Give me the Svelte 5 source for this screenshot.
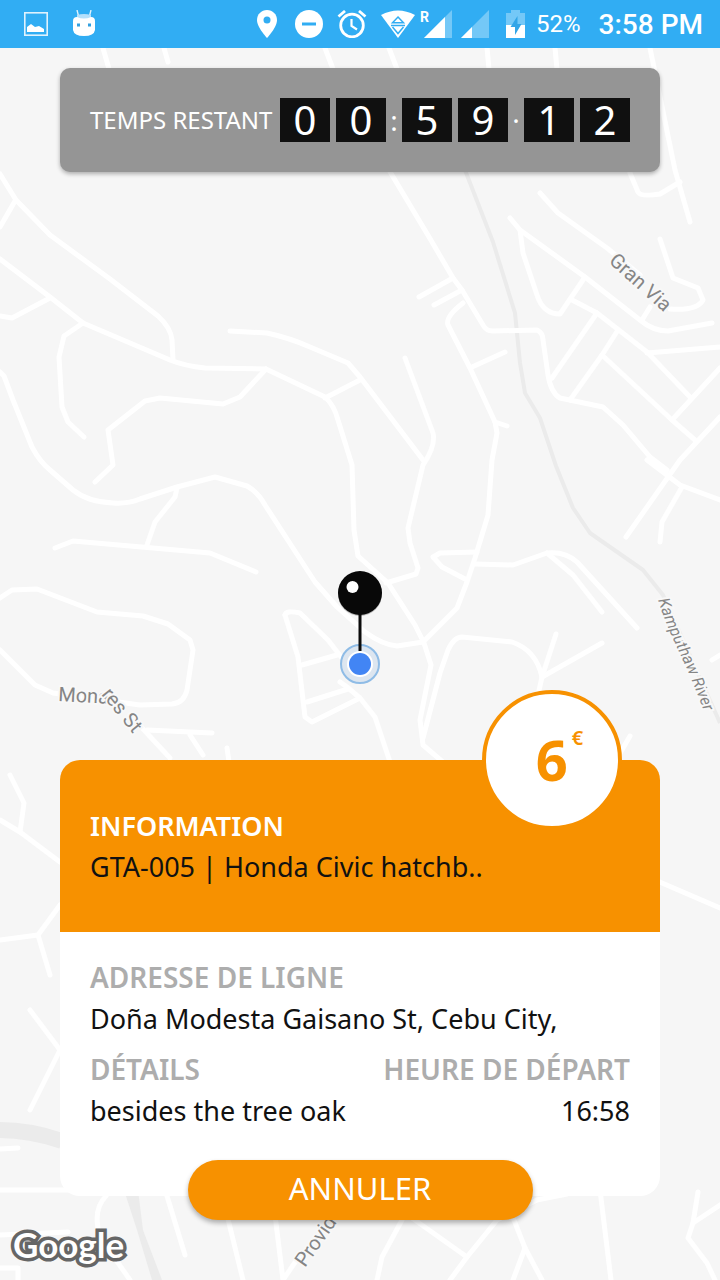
<script lang="ts">
	type Digit = { kind: 'digit' | 'sep'; value: string };

	const timer: Digit[] = [
		{ kind: 'digit', value: '0' },
		{ kind: 'digit', value: '0' },
		{ kind: 'sep', value: ':' },
		{ kind: 'digit', value: '5' },
		{ kind: 'digit', value: '9' },
		{ kind: 'sep', value: '·' },
		{ kind: 'digit', value: '1' },
		{ kind: 'digit', value: '2' }
	];

	const booking = {
		vehicle: 'GTA-005 | Honda Civic hatchb..',
		address: 'Doña Modesta Gaisano St, Cebu City,',
		details: 'besides the tree oak',
		departure: '16:58',
		price: '6'
	};

	const roads = [
		// west
		'M0 174L16 200L50 235L110 279L158 316Q171 328 172 340L173 360',
		'M15 201L0 227',
		'M0 259L50 297L83 323L170 360Q185 366 205 368L266 369L325 397Q334 405 338 420L352 465L354 530L358 556L388 583L415 625L424 643L431 665L420 720L423 745L450 768',
		'M50 298L12 318L0 316',
		'M83 323L64 336L59 357L62 407L68 422L84 437',
		'M0 372L4 376L13 400L32 447Q40 462 50 470L73 490Q88 502 113 503Q128 504 140 499L177 487L215 477L247 486Q258 492 265 505L315 582L337 607L365 632Q383 645 397 646L423 642L457 608L467 582L475 558L488 515L492 460L497 433L495 422L470 368L448 325Q445 317 463 303',
		'M266 369L240 397L223 404L160 398L145 401L108 430L113 465L95 482',
		'M230 331L267 333Q290 338 310 347L348 363L360 377L423 460',
		'M325 398L360 380',
		'M55 548L73 541L210 553L256 572',
		'M177 488L175 497L155 522L147 545',
		'M0 598L12 590L37 589L97 612L143 616L168 624L190 640L193 650L187 690Q184 703 172 704L140 705L53 693L35 685L0 650',
		'M130 715L170 758',
		'M147 730L212 733',
		'M190 735L203 755',
		'M227 748L229 762',
		'M285 615Q286 610 300 613L328 640L345 662M340 682L347 687L360 698L375 717L390 762',
		'M285 615L298 657L305 717L312 722L360 698',
		'M302 665L337 655',
		'M307 702L348 689',
		// centre
		'M325 48L333 69',
		'M389 48L397 69',
		'M487 48L489 69',
		'M555 48L557 69',
		'M103 48L109 69',
		'M164 48L168 62',
		'M389 170L432 242L453 278L462 290L483 325Q486 331 493 331L537 330Q543 333 543 340L548 375Q551 393 560 398L603 407L623 425L650 457L667 470M647 460L680 485L720 500',
		'M453 278L419 297',
		'M462 290L434 305',
		'M472 367L505 352',
		'M495 422L507 426',
		'M405 358L433 433Q436 446 423 465L408 528L410 543L418 568L416 574L386 583',
		'M477 552L440 553L433 557L442 567L467 580',
		'M475 564L513 565L547 553Q565 551 577 562L637 628',
		'M547 553L573 575L602 612',
		'M423 738L440 673L448 650Q454 637 462 637L512 642Q536 650 542 677L538 695',
		'M542 677L602 643',
		'M542 677L556 634',
		// east
		'M650 48L675 170L690 222',
		'M630 173L638 192Q640 197 660 194L680 182',
		'M540 193L558 213L607 248L640 275',
		'M510 218L520 230L585 277L640 320Q653 331 668 331L712 323',
		'M520 230L523 253L537 295Q543 314 560 314L585 277',
		'M660 239L673 278L698 288L703 300Q697 311 670 309',
		'M650 307L642 320',
		'M572 300L597 313L647 352L690 397',
		'M597 313L552 378',
		'M618 330L602 355L570 400',
		'M602 355L672 420L695 440',
		'M647 353L720 347',
		'M672 420L720 368',
		'M720 417L680 460L626 537',
		'M682 487L662 522L660 542',
		'M712 660L720 655',
		'M615 762L630 736',
		'M655 880L720 908',
		// south
		'M10 775L24 803L20 832L60 862',
		'M0 820L20 832',
		'M60 905L38 935L50 975',
		'M0 940L38 935',
		'M30 1010L60 1050L30 1110',
		'M0 1149L18 1148',
		'M0 1190L70 1190',
		'M0 1235L68 1232',
		'M0 1268L18 1268L18 1280',
		'M106 1196Q92 1210 100 1237L130 1280',
		'M167 1196L185 1255',
		'M227 1215L243 1280',
		'M275 1215L283 1280L300 1255',
		'M402 1220L382 1257L377 1280',
		'M412 1218L467 1257',
		'M450 1280L467 1257L497 1220L537 1200L567 1194',
		'M512 1215L525 1248L542 1280',
		'M525 1248L513 1280',
		'M600 1190L611 1280',
		'M698 1192L693 1223L688 1238L707 1263L715 1280',
		'M693 1223L720 1205'
	];
</script>

<div class="screen">
	<header class="status">
		<div class="group notices">
			<svg width="24" height="24" viewBox="0 0 24 24" aria-hidden="true">
				<rect x="0.8" y="0.8" width="22.4" height="22.4" fill="none" stroke="#dff2fd" stroke-width="1.6" />
				<path d="M3 20V15L7 12L11 15L15 14L20 17V20Z" fill="#fff" />
			</svg>
			<svg width="24" height="28" viewBox="0 0 24 28" aria-hidden="true">
				<path d="M5 0L6.500 6M19 0L17.500 6" stroke="#dff2fd" stroke-width="1.400" />
				<path d="M5 9V5Q12 3 19 5V9Z" fill="#b5e0fb" />
				<path d="M1 11Q1 7 5 7Q12 10 19 7Q23 7 23 11V20Q22 26 12 26Q2 26 1 20Z" fill="#fff" />
				<path d="M5 13.500h3v3h-3zM16 13.500h3v3h-3z" fill="#33a0e0" />
			</svg>
		</div>
		<div class="group">
			<svg width="28" height="28" viewBox="0 0 28 28" aria-hidden="true">
				<path d="M14 0C8.400 0 4 4.400 4 10C4 17.500 14 28 14 28S24 17.500 24 10C24 4.400 19.600 0 14 0Z" fill="#fff" />
				<circle cx="14" cy="10" r="3.500" fill="#31adf3" />
			</svg>
			<svg width="28" height="28" viewBox="0 0 28 28" aria-hidden="true">
				<circle cx="14" cy="14" r="14" fill="#fff" />
				<path d="M7 14H21" stroke="#31adf3" stroke-width="3" />
			</svg>
			<svg width="30" height="28" viewBox="0 0 30 28" aria-hidden="true">
				<circle cx="15" cy="15.500" r="11.300" fill="none" stroke="#fff" stroke-width="2.800" />
				<path d="M14.500 9V16L20 19.500" fill="none" stroke="#fff" stroke-width="2.200" />
				<path d="M1.500 6.500L8 1M28.500 6.500L22 1" stroke="#fff" stroke-width="2.800" />
			</svg>
			<div class="network">
				<svg width="34" height="28" viewBox="0 0 34 28" aria-hidden="true">
					<path d="M0 5Q17 -4 34 5L17 28Z" fill="#fff" />
					<path d="M17 7L22.500 12.800H11.500Z" fill="#fff" stroke="#31adf3" stroke-width="1.500" />
					<path d="M10 15.500H24M11.500 17L17 23.500L22.500 17" fill="none" stroke="#31adf3" stroke-width="1.500" />
				</svg>
				<svg width="32" height="28" viewBox="0 0 32 28" aria-hidden="true">
					<path d="M31 0V28H3Z" fill="#74c8f7" />
					<path d="M24 7V28H3Z" fill="#fff" />
					<text class="roaming" x="-1" y="12">R</text>
				</svg>
				<svg width="30" height="28" viewBox="0 0 30 28" aria-hidden="true">
					<path d="M30 0V28H2Z" fill="#74c8f7" />
					<path d="M13 17V28H2Z" fill="#fff" />
				</svg>
			</div>
			<svg width="26" height="28" viewBox="0 0 26 28" aria-hidden="true">
				<path d="M3 3H8V0H17V3H22V15H3Z" fill="#74c8f7" />
				<path d="M3 15H22V28H3Z" fill="#fff" />
				<path d="M14.500 6L7.500 17H12V25L18.500 14H14.500Z" fill="#31a5e8" />
			</svg>
		</div>
		<span class="battery">52%</span>
		<time class="clock">3:58 PM</time>
	</header>

	<main class="content">
		<svg class="map" viewBox="0 48 720 1232" preserveAspectRatio="xMidYMid slice" aria-label="Carte">
			<defs>
				<path id="monares" d="M58 701L112 704M103 697L150 755" />
				<path id="kamputhaw" d="M658 600Q667 628 681 656Q695 686 711 730" />
			</defs>
			<g fill="none" stroke-linejoin="round">
				<path class="river" d="M465 170L493 242L515 313L520 363L525 393L540 418L556 466L573 508L590 533L643 570L663 595L720 723" />
				<path class="avenue" d="M0 1130Q30 1130 62 1141" />
				{#each roads as d}
					<path class="road" {d} />
				{/each}
			</g>
			<path d="M124 1190H138L143 1230L162 1280H152L137 1230Z" fill="#ebebeb" />
			<g class="labels">
				<text transform="translate(608 262) rotate(42)">Gran Via</text>
				<text><textPath href="#monares">Monares St</textPath></text>
				<text class="water"><textPath href="#kamputhaw">Kamputhaw River</textPath></text>
				<text transform="translate(305 1268) rotate(-55)">Provid</text>
			</g>
			<circle cx="360" cy="664" r="19" fill="#dde6f0" stroke="#8fbce6" stroke-width="2" />
			<circle cx="360" cy="664" r="13" fill="#fff" />
			<circle cx="360" cy="664" r="11" fill="#4285f4" />
			<path d="M360 612V651" stroke="#0c0c0c" stroke-width="3" />
			<circle cx="360" cy="594" r="22" fill="#000" opacity="0.25" />
			<circle cx="360" cy="593" r="22" fill="#080808" />
			<circle cx="352.500" cy="587" r="6" fill="#fff" />
		</svg>

		<section class="timer">
			<h1>TEMPS RESTANT</h1>
			<div class="digits" role="timer">
				{#each timer as part}
					<span class={part.kind}>{part.value}</span>
				{/each}
			</div>
		</section>

		<section class="card">
			<div class="price">
				<strong>{booking.price}</strong><sup>€</sup>
			</div>
			<div class="head">
				<h2>INFORMATION</h2>
				<p>{booking.vehicle}</p>
			</div>
			<div class="body">
				<div>
					<h2>ADRESSE DE LIGNE</h2>
					<p>{booking.address}</p>
				</div>
				<div class="split">
					<div>
						<h2>DÉTAILS</h2>
						<p>{booking.details}</p>
					</div>
					<div class="right">
						<h2>HEURE DE DÉPART</h2>
						<p>{booking.departure}</p>
					</div>
				</div>
			</div>
		</section>
		<button type="button" class="cancel">ANNULER</button>
		<span class="google">Google</span>
	</main>
</div>

<style>
	:global(body) {
		margin: 0;
	}

	.screen {
		min-height: 100vh;
		display: flex;
		flex-direction: column;
		font-family: 'Noto Sans', sans-serif;
		background: #f6f6f6;
	}

	.status {
		height: 48px;
		box-sizing: border-box;
		padding: 0 17px 0 24px;
		display: flex;
		align-items: center;
		background: #31adf3;
		color: #fff;
		font-family: Roboto, sans-serif;
	}

	.group {
		display: flex;
		align-items: center;
		gap: 14px;
	}

	.notices {
		gap: 24px;
		margin-right: auto;
	}

	.network {
		display: flex;
		gap: 6px;
	}

	.network svg {
		overflow: visible;
	}

	.roaming {
		font-size: 14px;
		font-weight: 700;
		fill: #fff;
	}

	.battery {
		margin-left: 7px;
		font-size: 24px;
	}

	.clock {
		margin-left: 18px;
		font-size: 28px;
		font-weight: 500;
	}

	.content {
		position: relative;
		flex: 1;
		display: flex;
		flex-direction: column;
		padding: 20px 60px 60px;
	}

	.map {
		position: absolute;
		inset: 0;
		width: 100%;
		height: 100%;
	}

	.road {
		stroke: #fff;
		stroke-width: 5;
		stroke-linecap: round;
	}

	.river {
		stroke: #ebebeb;
		stroke-width: 4;
	}

	.avenue {
		stroke: #ebebeb;
		stroke-width: 16;
	}

	.labels {
		font-family: Roboto, sans-serif;
		font-size: 20px;
		fill: #858585;
		stroke: #f8f8f8;
		stroke-width: 4;
		paint-order: stroke;
	}

	.water {
		font-size: 16px;
		font-style: italic;
	}

	.timer {
		position: relative;
		display: flex;
		align-items: center;
		justify-content: space-between;
		padding: 30px;
		border-radius: 10px;
		background: #959595;
		box-shadow: 0 2px 4px rgba(0, 0, 0, 0.3);
		color: #fff;
	}

	.timer h1 {
		margin: 0;
		font-size: 24px;
		font-weight: 400;
		line-height: 44px;
		white-space: nowrap;
	}

	.digits {
		display: flex;
		gap: 6px;
	}

	.digit {
		width: 50px;
		background: #101010;
		font-size: 40px;
		font-weight: 400;
		line-height: 44px;
		text-align: center;
	}

	.sep {
		width: 4px;
		display: flex;
		justify-content: center;
		font-size: 28px;
		line-height: 44px;
	}

	.card {
		position: relative;
		margin-top: auto;
		border-radius: 20px;
		background: #fff;
	}

	.card h2,
	.card p {
		margin: 0;
		line-height: 41px;
	}

	.card h2 {
		font-size: 28px;
		font-weight: 600;
		color: #adadad;
	}

	.card p {
		font-size: 27px;
		color: #111;
	}

	.head {
		padding: 45px 30px;
		border-radius: 20px 20px 0 0;
		background: #f79100;
	}

	.card .head h2 {
		font-size: 27px;
		color: #fff;
	}

	.body {
		display: flex;
		flex-direction: column;
		gap: 10px;
		padding: 25px 30px 65px;
	}

	.split {
		display: flex;
		justify-content: space-between;
	}

	.right {
		text-align: right;
	}

	.price {
		position: absolute;
		top: -70px;
		right: 38px;
		box-sizing: border-box;
		width: 140px;
		height: 140px;
		display: flex;
		align-items: center;
		justify-content: center;
		gap: 4px;
		padding: 0 0 2px 15px;
		border: 4px solid #f79100;
		border-radius: 50%;
		background: #fff;
		color: #f79100;
	}

	.price strong {
		font-size: 56px;
		line-height: 76px;
	}

	.price sup {
		align-self: flex-start;
		margin-top: 30px;
		font-size: 20px;
		font-weight: 600;
		line-height: 28px;
	}

	.cancel {
		position: relative;
		align-self: center;
		width: 345px;
		height: 60px;
		margin-top: -36px;
		padding: 0 0 4px;
		border: 0;
		border-radius: 30px;
		background: #f79100;
		box-shadow: 0 3px 5px rgba(0, 0, 0, 0.3);
		color: #fff;
		font-family: inherit;
		font-size: 31px;
	}

	.google {
		position: absolute;
		left: 13px;
		bottom: 14px;
		font-family: Lato, sans-serif;
		font-size: 35px;
		font-weight: 700;
		line-height: 44px;
		color: #fff;
		-webkit-text-stroke: 7px #666;
		paint-order: stroke fill;
	}
</style>
